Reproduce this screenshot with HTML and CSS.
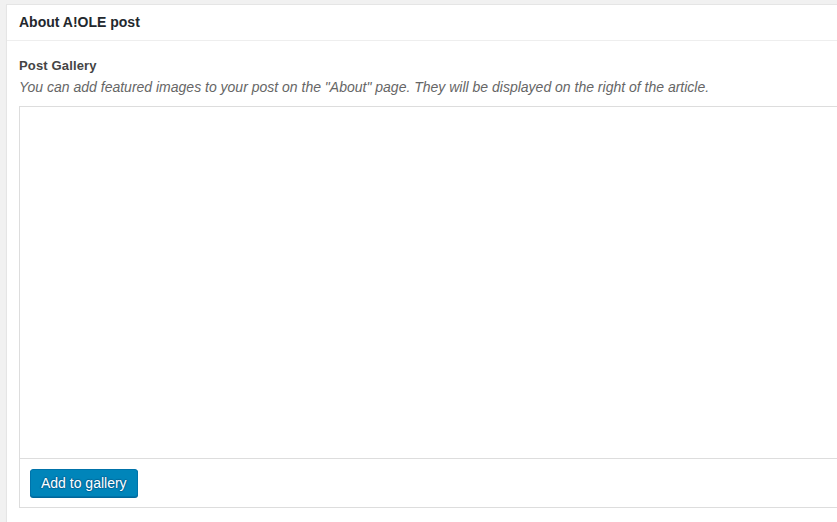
FILE: index.html
```html
<!DOCTYPE html>
<html>
<head>
<meta charset="utf-8">
<link rel="stylesheet" href="styles.css">
</head>
<body>
<div class="postbox">
  <h2 class="hndle">About A!OLE post</h2>
  <div class="inside">
    <div class="label">Post Gallery</div>
    <p class="desc">You can add featured images to your post on the "About" page. They will be displayed on the right of the article.</p>
    <div class="gallery">
      <div class="gallery-area"></div>
      <div class="gallery-footer">
        <button class="button-primary">Add to gallery</button>
      </div>
    </div>
  </div>
</div>
</body>
</html>
```
FILE: styles.css
```css
html, body { margin: 0; padding: 0; }
body {
  background: #f1f1f1;
  width: 837px;
  height: 522px;
  overflow: hidden;
  font-family: "Liberation Sans", Arial, sans-serif;
  color: #23282d;
}
.postbox {
  margin: 4px 0 0 6px;
  width: 860px;
  background: #fff;
  border: 1px solid #e5e5e5;
  box-shadow: 0 1px 1px rgba(0,0,0,0.04);
}
.hndle {
  margin: 0;
  font-size: 14px;
  font-weight: bold;
  line-height: 18px;
  padding: 8px 12px 9px;
  border-bottom: 1px solid #eee;
  color: #23282d;
}
.inside {
  padding: 16px 0 30px 12px;
}
.label {
  font-size: 13px;
  font-weight: bold;
  color: #444;
  line-height: 18px;
  letter-spacing: 0.15px;
}
.desc {
  margin: 3px 0 0;
  font-size: 14px;
  font-style: italic;
  color: #666;
  line-height: 18px;
}
.gallery {
  margin-top: 10px;
  border: 1px solid #ddd;
  width: 860px;
}
.gallery-area {
  height: 351px;
}
.gallery-footer {
  border-top: 1px solid #ddd;
  padding: 10px 10px 10px;
}
.button-primary {
  display: block;
  font-family: "Liberation Sans", Arial, sans-serif;
  font-size: 14px;
  height: 28px;
  line-height: 26px;
  padding: 0 10px 1px;
  background: #0085ba;
  border: 1px solid #0073aa;
  border-radius: 3px;
  box-shadow: 0 1px 0 #006799;
  color: #fff;
  text-shadow: 0 -1px 1px #006799, 1px 0 1px #006799, 0 1px 1px #006799, -1px 0 1px #006799;
}
```
